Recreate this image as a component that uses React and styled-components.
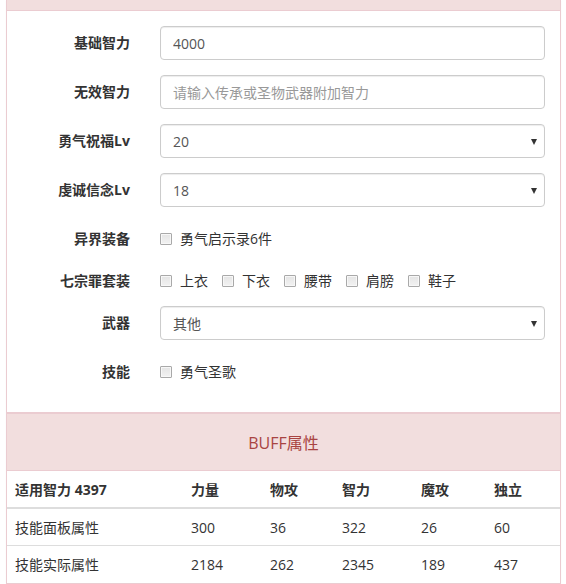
import React from "react";
import styled, { createGlobalStyle } from "styled-components";

const Global = createGlobalStyle`
  html, body { margin: 0; padding: 0; background: #fff; }
  body {
    font-family: "Open Sans", "Noto Sans CJK SC", sans-serif;
    font-size: 14px;
    color: #333;
  }
  * { box-sizing: border-box; }
`;

const Page = styled.div`
  padding: 0 5px 0 6px;
`;

const Panel = styled.div`
  border: 1px solid ${(p) => p.$border || "#ddd"};
  border-top: ${(p) => (p.$cut ? "none" : undefined)};
  background: #fff;
  box-shadow: 0 1px 1px rgba(0, 0, 0, 0.05);
`;

const HeadStrip = styled.div`
  height: 11px;
  background: #f2dede;
  border-bottom: 1px solid #ebccd1;
`;

const Heading = styled.div`
  height: 57px;
  background: #f2dede;
  border-bottom: 1px solid #ebccd1;
  color: #a94442;
  font-size: 16px;
  display: flex;
  align-items: center;
  justify-content: center;
`;

const Body = styled.div`
  padding: 15px 15px 30px;
  display: grid;
  grid-template-columns: 108px 1fr;
  column-gap: 30px;
  row-gap: 15px;
  align-items: start;
`;

const Label = styled.div`
  text-align: right;
  font-weight: 700;
  font-size: 14px;
  color: #333;
  line-height: 20px;
  padding-top: 7px;
`;

const Input = styled.input`
  display: block;
  width: 100%;
  height: 34px;
  padding: 6px 12px;
  font-family: "Open Sans", "Noto Sans CJK SC", sans-serif;
  font-size: 14px;
  color: #555;
  background: #fff;
  border: 1px solid #ccc;
  border-radius: 4px;
  box-shadow: inset 0 1px 1px rgba(0, 0, 0, 0.075);
  outline: none;
  &::placeholder { color: #999; }
`;

const SelectWrap = styled.div`
  position: relative;
  &::after {
    content: "";
    position: absolute;
    right: 8px;
    top: 15px;
    border-left: 3.5px solid transparent;
    border-right: 3.5px solid transparent;
    border-top: 6px solid #333;
    pointer-events: none;
  }
`;

const Select = styled.select`
  display: block;
  width: 100%;
  height: 34px;
  padding: 6px 12px;
  font-family: "Open Sans", "Noto Sans CJK SC", sans-serif;
  font-size: 14px;
  color: #555;
  background: #fff;
  border: 1px solid #ccc;
  border-radius: 4px;
  box-shadow: inset 0 1px 1px rgba(0, 0, 0, 0.075);
  appearance: none;
  -webkit-appearance: none;
  outline: none;
`;

const CheckRow = styled.div`
  display: flex;
  align-items: center;
  gap: 14px;
  padding-top: 7px;
  height: 27px;
`;

const CheckItem = styled.label`
  display: inline-flex;
  align-items: center;
  gap: 8px;
  font-size: 14px;
  color: #333;
  line-height: 20px;
  cursor: pointer;
`;

const Box = styled.input.attrs({ type: "checkbox" })`
  appearance: none;
  -webkit-appearance: none;
  margin: 0;
  width: 12px;
  height: 12px;
  border: 1px solid #a9a9a9;
  border-radius: 1px;
  background: linear-gradient(#e4e4e4, #f2f2f2);
  box-shadow: inset 0 0 0 1px #f7f7f7;
`;

const Table = styled.table`
  width: 100%;
  border-collapse: collapse;
  font-size: 14px;
`;

const Th = styled.th`
  text-align: left;
  font-weight: 700;
  padding: 8px;
  height: 37px;
  border-bottom: 2px solid #ddd;
  color: #333;
  width: ${(p) => p.$w || "auto"};
`;

const Td = styled.td`
  padding: 8px;
  height: 37px;
  color: #333;
  border-top: ${(p) => (p.$first ? "none" : "1px solid #ddd")};
`;

const widths = ["176px", "79px", "72px", "79px", "73px", "auto"];
const headers = ["适用智力 4397", "力量", "物攻", "智力", "魔攻", "独立"];
const rows = [
  ["技能面板属性", "300", "36", "322", "26", "60"],
  ["技能实际属性", "2184", "262", "2345", "189", "437"],
];

export default function App() {
  return (
    <Page>
      <Global />
      <Panel $border="#ebccd1" $cut>
        <HeadStrip />
        <Body>
          <Label>基础智力</Label>
          <Input defaultValue="4000" />

          <Label>无效智力</Label>
          <Input placeholder="请输入传承或圣物武器附加智力" />

          <Label>勇气祝福Lv</Label>
          <SelectWrap>
            <Select defaultValue="20">
              <option>20</option>
            </Select>
          </SelectWrap>

          <Label>虔诚信念Lv</Label>
          <SelectWrap>
            <Select defaultValue="18">
              <option>18</option>
            </Select>
          </SelectWrap>

          <Label>异界装备</Label>
          <CheckRow>
            <CheckItem>
              <Box />
              勇气启示录6件
            </CheckItem>
          </CheckRow>

          <Label>七宗罪套装</Label>
          <CheckRow>
            {["上衣", "下衣", "腰带", "肩膀", "鞋子"].map((t) => (
              <CheckItem key={t}>
                <Box />
                {t}
              </CheckItem>
            ))}
          </CheckRow>

          <Label>武器</Label>
          <SelectWrap>
            <Select defaultValue="其他">
              <option>其他</option>
            </Select>
          </SelectWrap>

          <Label>技能</Label>
          <CheckRow>
            <CheckItem>
              <Box />
              勇气圣歌
            </CheckItem>
          </CheckRow>
        </Body>
      </Panel>
      <Panel $border="#ebccd1">
        <Heading>BUFF属性</Heading>
        <Table>
          <thead>
            <tr>
              {headers.map((h, i) => (
                <Th key={h} $w={widths[i]}>
                  {h}
                </Th>
              ))}
            </tr>
          </thead>
          <tbody>
            {rows.map((r, ri) => (
              <tr key={ri}>
                {r.map((c, ci) => (
                  <Td key={ci} $first={ri === 0}>
                    {c}
                  </Td>
                ))}
              </tr>
            ))}
          </tbody>
        </Table>
      </Panel>
    </Page>
  );
}
